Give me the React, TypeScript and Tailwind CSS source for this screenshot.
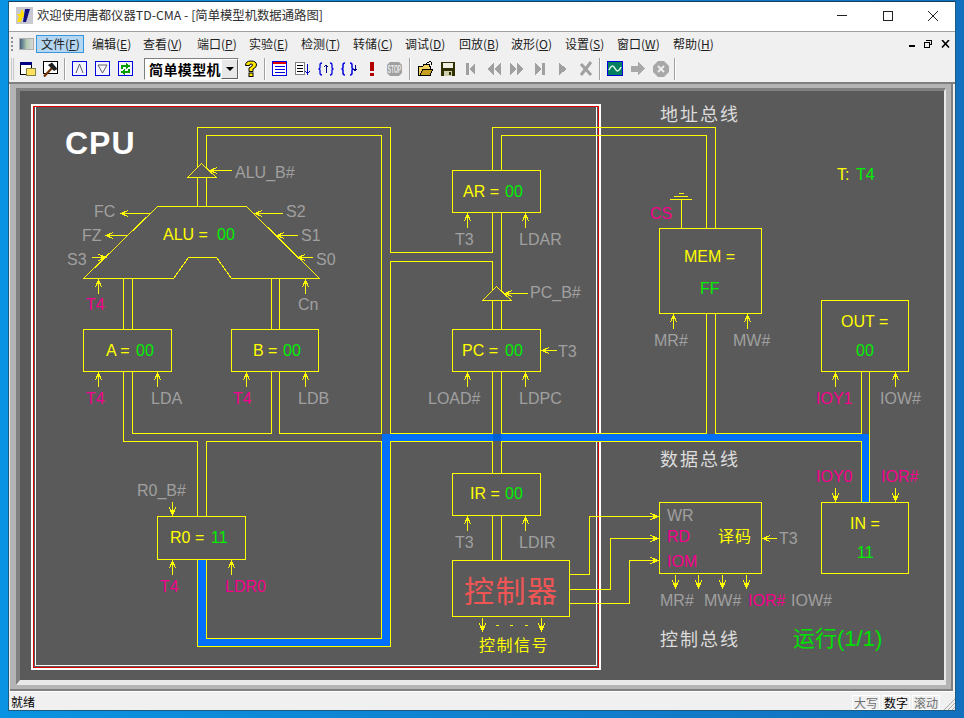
import React from "react";

const Y = "#ffff00";

type Dir = "u" | "d" | "l" | "r";
type ArrowDef = [Dir, number, number, number];

function arrowPath([d, x, y, n]: ArrowDef) {
  if (d === "u") return `M${x} ${y}V${y + n}M${x} ${y}L${x - 3} ${y + 8}M${x} ${y}L${x + 3} ${y + 8}M${x} ${y}L${x - 1} ${y + 5}M${x} ${y}L${x + 1} ${y + 5}`;
  if (d === "d") return `M${x} ${y}V${y - n}M${x} ${y}L${x - 3} ${y - 8}M${x} ${y}L${x + 3} ${y - 8}M${x} ${y}L${x - 1} ${y - 5}M${x} ${y}L${x + 1} ${y - 5}`;
  if (d === "l") return `M${x} ${y}H${x + n}M${x} ${y}L${x + 8} ${y - 3}M${x} ${y}L${x + 8} ${y + 3}M${x} ${y}L${x + 5} ${y - 1}M${x} ${y}L${x + 5} ${y + 1}`;
  return `M${x} ${y}H${x - n}M${x} ${y}L${x - 8} ${y - 3}M${x} ${y}L${x - 8} ${y + 3}M${x} ${y}L${x - 5} ${y - 1}M${x} ${y}L${x - 5} ${y + 1}`;
}

const arrows: ArrowDef[] = [
  ["u", 98.5, 279.5, 14], ["u", 305.5, 279.5, 14],
  ["u", 98.5, 372.5, 14], ["u", 157.5, 372.5, 14], ["u", 246.5, 372.5, 14], ["u", 305.5, 372.5, 14],
  ["u", 172.5, 560.5, 14], ["u", 231.5, 560.5, 14],
  ["u", 467.5, 213.5, 14], ["u", 525.5, 213.5, 14],
  ["u", 467.5, 372.5, 14], ["u", 525.5, 372.5, 14],
  ["u", 467.5, 516.5, 14], ["u", 525.5, 516.5, 14],
  ["u", 673.5, 314.5, 14], ["u", 747.5, 314.5, 14],
  ["u", 835.5, 372.5, 14], ["u", 895.5, 372.5, 14],
  ["d", 172.5, 515.5, 14], ["d", 835.5, 501.5, 14], ["d", 895.5, 501.5, 14],
  ["d", 675.5, 588.5, 14], ["d", 698.5, 588.5, 14], ["d", 722.5, 588.5, 14], ["d", 746.5, 588.5, 14],
  ["d", 482.5, 631.5, 14], ["d", 541.5, 631.5, 14],
  ["r", 106.5, 257.5, 15], ["r", 658.5, 516.5, 28], ["r", 658.5, 538.5, 48], ["r", 658.5, 560.5, 29],
  ["l", 120.5, 213.5, 30], ["l", 105.5, 235.5, 22], ["l", 254.5, 213.5, 28], ["l", 276.5, 235.5, 21],
  ["l", 297.5, 257.5, 15], ["l", 209.5, 170.5, 22], ["l", 504.5, 293.5, 23], ["l", 541.5, 350.5, 15],
  ["l", 762.5, 538.5, 14],
];

const lines = [
  "197.5,167 197.5,127.5 390.5,127.5 390.5,252.5 492.5,252.5 492.5,213",
  "206.5,168 206.5,135.5 381.5,135.5 381.5,433.5 279.5,433.5 279.5,372",
  "197.5,178 197.5,206",
  "206.5,178 206.5,206",
  "123.5,278 123.5,329",
  "132.5,278 132.5,329",
  "271.5,278 271.5,329",
  "279.5,278 279.5,329",
  "132.5,372 132.5,433.5 271.5,433.5 271.5,372",
  "123.5,372 123.5,441.5 197.5,441.5 197.5,516",
  "206.5,516 206.5,441.5 381.5,441.5 381.5,638.5 206.5,638.5 206.5,560",
  "197.5,560 197.5,646.5 390.5,646.5 390.5,441.5 492.5,441.5 492.5,473",
  "390.5,433.5 390.5,261.5 492.5,261.5 492.5,291",
  "492.5,170 492.5,127.5 715.5,127.5 715.5,228",
  "501.5,170 501.5,135.5 706.5,135.5 706.5,228",
  "501.5,213 501.5,291",
  "492.5,300 492.5,329",
  "501.5,300 501.5,329",
  "492.5,372 492.5,433.5 390.5,433.5",
  "501.5,372 501.5,433.5 706.5,433.5 706.5,314",
  "715.5,314 715.5,433.5 861.5,433.5 861.5,372",
  "501.5,473 501.5,441.5 861.5,441.5 861.5,502",
  "869.5,372 869.5,502",
  "492.5,516 492.5,560",
  "501.5,516 501.5,560",
  "570,574.5 589.5,574.5 589.5,516.5 650,516.5",
  "570,589.5 610.5,589.5 610.5,538.5 650,538.5",
  "570,603.5 629.5,603.5 629.5,560.5 650,560.5",
  "681.5,228 681.5,199.5",
  "670,199.5 692,199.5",
  "674,196.5 688,196.5",
  "679,193.5 684,193.5",
  "496,625.5 499,625.5",
  "510,625.5 513,625.5",
  "525,625.5 528,625.5",
];

const boxes: [number, number, number, number][] = [
  [83.5, 329.5, 88, 42], [231.5, 329.5, 87, 42], [157.5, 516.5, 88, 43],
  [452.5, 170.5, 88, 42], [452.5, 329.5, 88, 42], [452.5, 473.5, 88, 42], [452.5, 560.5, 117, 56],
  [659.5, 228.5, 102, 85], [821.5, 300.5, 87, 71], [821.5, 502.5, 87, 71], [659.5, 502.5, 102, 71],
];

const G = "fill-[#a0a0a0]";
const M = "fill-[#f5008c]";
const L = "fill-[#ffff00]";
const N = "fill-[#00f000]";

const labels: [string, number, number, string][] = [
  ["ALU_B#", 235, 178, G], ["FC", 94, 217, G], ["FZ", 82, 241, G], ["S3", 67, 265, G],
  ["S2", 286, 217, G], ["S1", 301, 241, G], ["S0", 316, 265, G],
  ["ALU =", 163, 240, L], ["00", 217, 240, N],
  ["T4", 86, 310, M], ["Cn", 298, 310, G],
  ["A =", 106, 356, L], ["00", 136, 356, N], ["B =", 253, 356, L], ["00", 283, 356, N],
  ["T4", 86, 404, M], ["LDA", 151, 404, G], ["T4", 233, 404, M], ["LDB", 298, 404, G],
  ["R0_B#", 137, 496, G], ["R0 =", 170, 543, L], ["11", 211, 543, N],
  ["T4", 160, 592, M], ["LDR0", 225, 592, M],
  ["AR =", 463, 197, L], ["00", 505, 197, N], ["T3", 455, 245, G], ["LDAR", 519, 245, G],
  ["PC_B#", 530, 298, G], ["PC =", 462, 356, L], ["00", 505, 356, N], ["T3", 558, 357, G],
  ["LOAD#", 428, 404, G], ["LDPC", 519, 404, G],
  ["IR =", 470, 499, L], ["00", 505, 499, N], ["T3", 455, 548, G], ["LDIR", 519, 548, G],
  ["T:", 837, 180, L], ["T4", 856, 180, N], ["CS", 650, 219, M],
  ["MEM =", 684, 262, L], ["FF", 700, 294, N], ["MR#", 654, 346, G], ["MW#", 733, 346, G],
  ["OUT =", 841, 327, L], ["00", 856, 356, N], ["IOY1", 816, 404, M], ["IOW#", 880, 404, G],
  ["IOY0", 816, 482, M], ["IOR#", 881, 482, M], ["IN =", 850, 529, L], ["11", 857, 558, N],
  ["WR", 667, 521, G], ["RD", 667, 542, M], ["IOM", 667, 567, M], ["T3", 779, 544, G],
  ["MR#", 660, 606, G], ["MW#", 704, 606, G], ["IOR#", 748, 606, M], ["IOW#", 791, 606, G],
];

function Diagram() {
  return (
    <svg viewBox="20 91 924 589" width={924} height={589} className="block font-['Liberation_Sans','Noto_Sans_CJK_SC',sans-serif]">
      <rect x={20} y={91} width={924} height={589} fill="#5a5a5a" />
      <g shapeRendering="crispEdges">
        <rect x={31.5} y={104.5} width={569} height={565} fill="none" stroke="#ffffff" strokeWidth={1} />
        <rect x={32.5} y={105.5} width={567} height={563} fill="none" stroke="#ffffff" strokeWidth={1} />
        <rect x={33.5} y={106.5} width={565} height={561} fill="none" stroke="#e00000" strokeWidth={1} />
        <polyline points="35.5,107 35.5,665.5 596.5,665.5 596.5,107" fill="none" stroke="#ffffff" strokeWidth={1} />
        <rect x={198} y={560} width={8} height={86} fill="#0070fa" />
        <rect x={198} y={639} width={192} height={7} fill="#0070fa" />
        <rect x={382} y={434} width={8} height={205} fill="#0070fa" />
        <rect x={382} y={434} width={480} height={7} fill="#0070fa" />
        <rect x={862} y={434} width={7} height={68} fill="#0070fa" />
        <rect x={493} y={434} width={8} height={7} fill="#0060d8" />
        {lines.map((p, i) => (
          <polyline key={i} points={p} fill="none" stroke={Y} strokeWidth={1} />
        ))}
        {boxes.map(([x, y, w, h], i) => (
          <rect key={i} x={x} y={y} width={w} height={h} fill="none" stroke={Y} strokeWidth={1} />
        ))}
        <polygon points="157.5,206.5 246.5,206.5 319.5,278.5 231.5,278.5 216.5,257.5 188.5,257.5 173.5,278.5 83.5,278.5" fill="#5a5a5a" stroke={Y} strokeWidth={1} />
        <polygon points="201.5,163.5 216.5,177.5 187.5,177.5" fill="none" stroke={Y} strokeWidth={1} />
        <polygon points="496.5,286.5 511.5,300.5 482.5,300.5" fill="none" stroke={Y} strokeWidth={1} />
        {arrows.map((a, i) => (
          <path key={i} d={arrowPath(a)} fill="none" stroke={Y} strokeWidth={1} />
        ))}
      </g>
      <text x={65} y={154} className="fill-white text-[32px] font-bold tracking-[1px]">CPU</text>
      {labels.map(([t, x, y, c], i) => (
        <text key={i} x={x} y={y} className={`text-[16px] ${c}`}>{t}</text>
      ))}
      <text x={464} y={602} className="text-[30px] tracking-[1.5px] fill-[#f05555]">控制器</text>
      <text x={479} y={651} className="text-[16px] tracking-[1.5px] fill-[#ffff00]">控制信号</text>
      <text x={718} y={542} className="text-[16px] tracking-[1px] fill-[#ffff00]">译码</text>
      <text x={660} y={121} className="text-[18px] tracking-[2px] fill-[#dcdcdc]">地址总线</text>
      <text x={660} y={466} className="text-[18px] tracking-[2px] fill-[#dcdcdc]">数据总线</text>
      <text x={660} y={646} className="text-[18px] tracking-[2px] fill-[#dcdcdc]">控制总线</text>
      <text x={793} y={646} className="text-[22px] fill-[#00e000]">运行(1/1)</text>
    </svg>
  );
}

const S = (p: { children: React.ReactNode }) => (
  <svg width={16} height={16} viewBox="0 0 16 16" shapeRendering="crispEdges" className="block">{p.children}</svg>
);

const icons = {
  win: (
    <S>
      <rect x="0.5" y="1.5" width="11" height="12" fill="#fff" stroke="#000" />
      <rect x="0" y="1" width="12" height="3" fill="#000080" />
      <rect x="6.5" y="7.5" width="9" height="7" fill="#ffe060" stroke="#808040" />
    </S>
  ),
  hammer: (
    <S>
      <rect x="0.5" y="0.5" width="14" height="12" fill="#fff" stroke="#000" />
      <path d="M1 15.5 L9 7" stroke="#703000" strokeWidth="2.2" shapeRendering="auto" />
      <path d="M5 4 L9 1.5 L14.5 8 L11 10 Z" fill="#202020" shapeRendering="auto" />
    </S>
  ),
  up: (
    <S>
      <rect x="0.5" y="0.5" width="14" height="14" fill="#f4f4ff" stroke="#0000e0" />
      <path d="M4 12 L7.5 3 L11 12" fill="none" stroke="#606060" shapeRendering="auto" />
    </S>
  ),
  down: (
    <S>
      <rect x="0.5" y="0.5" width="14" height="14" fill="#f4f4ff" stroke="#0000e0" />
      <path d="M3 4 H12 L7.5 12 Z" fill="none" stroke="#606060" shapeRendering="auto" />
    </S>
  ),
  cycle: (
    <S>
      <rect x="0.5" y="0.5" width="14" height="14" fill="#f4f4ff" stroke="#0000e0" />
      <path d="M4 8 V5 H10 M8 3 L11 5 L8 7 M11 8 V11 H5 M7 9 L4 11 L7 13" fill="none" stroke="#00a000" strokeWidth="1.5" />
    </S>
  ),
  help: (
    <svg width={14} height={17} viewBox="0 0 14 17" className="block">
      <path d="M1.5 5.5 Q1.5 1 7 1 Q12.5 1 12.5 5 Q12.5 7.5 9 9 V11.5 H5 V8 Q8.5 6.5 8.5 5 Q8.5 4 7 4 Q5.5 4 5.5 5.5 Z" fill="#ffe800" stroke="#000" strokeWidth="1" />
      <rect x="5" y="13" width="4" height="3.5" fill="#ffe800" stroke="#000" />
    </svg>
  ),
  list: (
    <S>
      <rect x="0.5" y="0.5" width="14" height="14" fill="#fff" stroke="#0000e0" />
      <rect x="1" y="1" width="13" height="2" fill="#e00000" />
      <path d="M3 5.5H13M3 8.5H13M3 11.5H13" stroke="#0000e0" />
    </S>
  ),
  listDown: (
    <S>
      <rect x="0.5" y="1.5" width="9" height="12" fill="#fff" stroke="#808080" />
      <path d="M2 4.5H8M2 7.5H8M2 10.5H8" stroke="#000" />
      <path d="M12.5 3V13M10.5 10L12.5 13L14.5 10" stroke="#0000c0" fill="none" />
    </S>
  ),
  braceUp: (
    <S>
      <path d="M4 2 Q2 2 2 4 V7 L1 8 L2 9 V12 Q2 14 4 14 M12 2 Q14 2 14 4 V7 L15 8 L14 9 V12 Q14 14 12 14" fill="none" stroke="#0000e0" strokeWidth="1.3" shapeRendering="auto" />
      <path d="M8 12V4M6 6L8 4L10 6" fill="none" stroke="#000080" />
    </S>
  ),
  braceDown: (
    <S>
      <path d="M4 2 Q2 2 2 4 V7 L1 8 L2 9 V12 Q2 14 4 14 M9 2 Q11 2 11 4 V7 L12 8 L11 9 V12 Q11 14 9 14" fill="none" stroke="#0000e0" strokeWidth="1.5" shapeRendering="auto" />
      <path d="M14 4V10M12.5 8L14 10L15.5 8" fill="none" stroke="#000080" />
    </S>
  ),
  bang: (
    <S>
      <rect x="6" y="1" width="4" height="9" fill="#b00000" />
      <rect x="6" y="12" width="4" height="3" fill="#b00000" />
    </S>
  ),
  stop: (
    <svg width={17} height={16} viewBox="0 0 17 16" className="block">
      <polygon points="4,1 13,1 16,4 16,12 13,15 4,15 1,12 1,4" fill="#a0a0a0" />
      <text transform="translate(1.5 11.5) scale(0.85 1.7)" className="text-[6px] font-bold fill-[#e8e8e8] font-['Liberation_Sans',sans-serif]">STOP</text>
    </svg>
  ),
  folder: (
    <S>
      <path d="M1 5 H6 L7 3 H12 V5 H13 V14 H1 Z" fill="#f0d060" stroke="#000" />
      <path d="M3 14 L6 8 H16 L13 14 Z" fill="#c8a020" stroke="#000" />
      <path d="M9 3 Q11 0 14 1 L15 4" fill="none" stroke="#000" />
    </S>
  ),
  disk: (
    <S>
      <rect x="1" y="1" width="14" height="14" fill="#303000" />
      <rect x="3" y="2" width="10" height="5" fill="#f0f0e0" />
      <rect x="4" y="10" width="8" height="5" fill="#d0d0b0" />
      <rect x="9" y="11" width="2" height="3" fill="#303000" />
    </S>
  ),
  first: (
    <S>
      <rect x="3" y="2" width="3" height="12" fill="#a0a0a0" />
      <polygon points="12,2 12,14 6,8" fill="#a0a0a0" />
    </S>
  ),
  rew: (
    <S>
      <polygon points="8,2 8,14 1,8" fill="#a0a0a0" />
      <polygon points="15,2 15,14 8,8" fill="#a0a0a0" />
    </S>
  ),
  ff: (
    <S>
      <polygon points="1,2 1,14 8,8" fill="#a0a0a0" />
      <polygon points="8,2 8,14 15,8" fill="#a0a0a0" />
    </S>
  ),
  last: (
    <S>
      <polygon points="3,2 3,14 10,8" fill="#a0a0a0" />
      <rect x="10" y="2" width="3" height="12" fill="#a0a0a0" />
    </S>
  ),
  play: (
    <S>
      <polygon points="4,2 4,14 12,8" fill="#a0a0a0" />
    </S>
  ),
  xmark: (
    <svg width={16} height={16} viewBox="0 0 16 16" className="block">
      <path d="M3 3 L13 14 M13 1 L3 14" stroke="#a0a0a0" strokeWidth="3" />
    </svg>
  ),
  wave: (
    <S>
      <rect x="0.5" y="0.5" width="15" height="14" fill="#008060" stroke="#0000e0" />
      <path d="M2 9 Q5 2 8 7.5 T14 6" fill="none" stroke="#e8ffe8" strokeWidth="1.5" shapeRendering="auto" />
    </S>
  ),
  arrow: (
    <S>
      <polygon points="1,5 8,5 8,1 15,8 8,14 8,11 1,11" fill="#a8a8a8" />
    </S>
  ),
  stopX: (
    <svg width={16} height={16} viewBox="0 0 16 16" className="block">
      <polygon points="5,0 11,0 16,5 16,11 11,16 5,16 0,11 0,5" fill="#a8a8a8" />
      <path d="M5 5L11 11M11 5L5 11" stroke="#f0f0f0" strokeWidth="1.8" />
    </svg>
  ),
};

function Tool({ children }: { children: React.ReactNode }) {
  return <div className="w-[23px] h-full flex items-center justify-center">{children}</div>;
}

function Sep({ className }: { className: string }) {
  return (
    <div className={`h-[22px] flex justify-center ${className}`}>
      <div className="w-[1px] h-full bg-[#a0a0a0] border-r border-white box-content" />
    </div>
  );
}

const menus: [string, string, string][] = [
  ["编辑", "E", "w-[51px]"],
  ["查看", "V", "w-[54px]"],
  ["端口", "P", "w-[52px]"],
  ["实验", "E", "w-[52px]"],
  ["检测", "T", "w-[52px]"],
  ["转储", "C", "w-[52px]"],
  ["调试", "D", "w-[54px]"],
  ["回放", "B", "w-[52px]"],
  ["波形", "O", "w-[54px]"],
  ["设置", "S", "w-[52px]"],
  ["窗口", "W", "w-[56px]"],
  ["帮助", "H", "w-[48px]"],
];

export default function App() {
  return (
    <div className="w-[964px] h-[718px] overflow-hidden pl-[8px] pt-[1px] bg-gradient-to-r from-[#0a93e2] to-[#1270bd] font-['Noto_Sans_CJK_SC','Liberation_Sans',sans-serif] text-[12px] text-[#202020]">
      <div className="w-[948px] h-[710px] flex flex-col bg-[#f0f0f0] border border-[#1c5a80] border-t-[#163f5c]">
        {/* title bar */}
        <div className="h-[30px] shrink-0 flex items-center bg-white border-b border-[#a0a0a0] pb-[2px] relative">
          <svg width={17} height={17} viewBox="0 0 17 17" className="ml-[7px] mr-[4px] block">
            <rect width="17" height="17" fill="#c8c8d0" />
            <path d="M1 15 L6 2 L8 6 L5 15 Z" fill="#ffe000" />
            <path d="M1 7 H12 L9 10 H3 Z" fill="#ffe000" />
            <path d="M9 2 H14 L10 15 H7 Z" fill="#101080" />
          </svg>
          <span className="text-[12.35px] text-[#303030] leading-none">欢迎使用唐都仪器TD-CMA - [简单模型机数据通路图]</span>
          <div className="ml-auto flex items-center h-full">
            <div className="w-[46px] flex justify-center"><div className="w-[10px] h-[1px] bg-[#202020]" /></div>
            <div className="w-[46px] flex justify-center"><div className="w-[10px] h-[10px] border border-[#202020]" /></div>
            <div className="w-[44px] flex justify-center">
              <svg width={12} height={12} viewBox="0 0 12 12"><path d="M1 1L11 11M11 1L1 11" stroke="#202020" strokeWidth="1" /></svg>
            </div>
          </div>
        </div>

        {/* menu */}
        <div className="h-[23px] shrink-0 flex items-center">
          <div className="ml-[2px] w-[4px] h-[14px] border-l-2 border-dotted border-[#909090]" />
          <div className="ml-[4px] w-[15px] h-[12px] bg-gradient-to-r from-[#406080] via-[#b0c8b0] to-[#d8d8d8] border border-[#b0b0b0]" />
          <div className="ml-[2px] w-[48px] h-[18px] flex items-center pl-[4px] bg-[#b3d7f3] border border-[#3a96dd] mr-[3px]">
            文件(<u>F</u>)
          </div>
          {menus.map(([t, k, w]) => (
            <div key={t} className={`${w} pl-[5px]`}>
              {t}(<u>{k}</u>)
            </div>
          ))}
          <div className="ml-auto flex items-center mr-[5px] gap-[9px]">
            <div className="w-[6px] h-[2px] bg-black mt-[5px]" />
            <svg width={8} height={8} viewBox="0 0 8 8" shapeRendering="crispEdges"><path d="M2.5 .5H7.5V4.5H5.5M.5 2.5H5.5V7.5H.5Z" fill="none" stroke="#000" /><path d="M2 0H8V1H2ZM0 2H6V3H0Z" /></svg>
            <svg width={9} height={8} viewBox="0 0 9 8"><path d="M1 0L8 7.5M8 0L1 7.5" stroke="#000" strokeWidth="1.6" /></svg>
          </div>
        </div>

        {/* toolbar */}
        <div className="h-[27px] shrink-0 flex items-center pl-[2px]">
          <div className="w-[3px] h-[22px] border-x border-[#c8c8c8] mr-[2px]" />
          <Tool>{icons.win}</Tool>
          <Tool>{icons.hammer}</Tool>
          <Sep className="w-[6px]" />
          <Tool>{icons.up}</Tool>
          <Tool>{icons.down}</Tool>
          <Tool>{icons.cycle}</Tool>
          <div className="ml-[7px] w-[95px] h-[22px] flex border border-[#808080] border-r-white border-b-white bg-white">
            <div className="flex-1 pl-[4px] text-[14px] font-bold tracking-[0.4px] text-black leading-[20px] whitespace-nowrap overflow-hidden">简单模型机</div>
            <div className="w-[17px] h-full bg-[#e8e8e8] border-l border-t border-white border-r-[#606060] border-b-[#606060] border-r border-b flex items-center justify-center">
              <svg width={8} height={4} viewBox="0 0 8 4"><polygon points="0,0 8,0 4,4" fill="#000" /></svg>
            </div>
          </div>
          <Tool>{icons.help}</Tool>
          <Sep className="w-[6px]" />
          <Tool>{icons.list}</Tool>
          <Tool>{icons.listDown}</Tool>
          <Tool>{icons.braceUp}</Tool>
          <Tool>{icons.braceDown}</Tool>
          <Tool>{icons.bang}</Tool>
          <Tool>{icons.stop}</Tool>
          <Sep className="w-[7px]" />
          <Tool>{icons.folder}</Tool>
          <Tool>{icons.disk}</Tool>
          <Tool>{icons.first}</Tool>
          <Tool>{icons.rew}</Tool>
          <Tool>{icons.ff}</Tool>
          <Tool>{icons.last}</Tool>
          <Tool>{icons.play}</Tool>
          <Tool>{icons.xmark}</Tool>
          <Sep className="w-[6px]" />
          <Tool>{icons.wave}</Tool>
          <Tool>{icons.arrow}</Tool>
          <Tool>{icons.stopX}</Tool>
          <Sep className="w-[6px]" />
        </div>

        {/* client */}
        <div className="flex-1 min-h-0 flex flex-col border-t-2 border-[#808080] pl-[1px] pr-[2px]">
          <div className="flex-1 min-h-0 bg-[#b4b4b4] border-r-2 border-b-2 border-[#808080] pl-[6px] pt-[4px] pr-[5px] pb-[3px]">
            <div className="border-l-4 border-t-[3px] border-r-2 border-b-[5px] border-l-[#808080] border-t-[#808080] border-r-[#e8e8e8] border-b-[#e8e8e8]">
              <Diagram />
            </div>
          </div>
        </div>

        {/* status */}
        <div className="h-[19px] shrink-0 flex items-center border-t border-white bg-[#f0f0f0] pt-[2px] relative">
          <span className="pl-[2px] text-black">就绪</span>
          <div className="ml-auto flex items-center h-full gap-[2px] mr-[15px]">
            <div className="w-[28px] h-[15px] border border-white text-center leading-[14px] text-[#707070]">大写</div>
            <div className="w-[28px] h-[15px] border border-white text-center leading-[14px] text-black">数字</div>
            <div className="w-[28px] h-[15px] border border-white text-center leading-[14px] text-[#707070]">滚动</div>
          </div>
          <svg width={12} height={12} viewBox="0 0 12 12" className="absolute right-0 bottom-0">
            <path d="M1 12L12 1M5 12L12 5M9 12L12 9" stroke="#a8a8a8" />
          </svg>
        </div>
      </div>
    </div>
  );
}
